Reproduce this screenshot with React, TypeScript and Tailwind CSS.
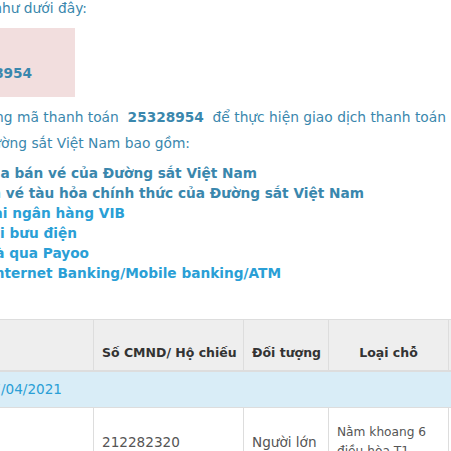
export default function App() {
  return (
    <div className="w-[451px] h-[451px] overflow-hidden bg-white font-['DejaVu_Sans',sans-serif] text-[13.8px] text-[#3a87ad]">
      <div className="-mt-[2px] leading-[20px]">
        <div className="flex justify-end whitespace-nowrap w-[87px]">
          Quý khách vui lòng thanh toán theo thông tin như dưới đây:
        </div>
      </div>

      <div className="mt-[10px] w-[75px] bg-[#f2dede] pt-[15px] pb-[14px] leading-[20px] font-bold text-[13.7px]">
        <div className="h-[20px]" />
        <div className="flex justify-end whitespace-nowrap w-[32px]">Mã thanh toán: 25328954</div>
      </div>

      <div className="mt-[7px] leading-[26px]">
        <div className="flex justify-end whitespace-nowrap w-[446px]">
          <span>
            Quý khách vui lòng sử dụng mã thanh toán&nbsp; <b className="text-[13.7px]">25328954</b>&nbsp; để thực hiện giao dịch thanh toán
          </span>
        </div>
        <div className="flex justify-end whitespace-nowrap w-[190px]">
          tại các điểm giao dịch của Đường sắt Việt Nam bao gồm:
        </div>
      </div>

      <div className="mt-[7px] leading-[20px] font-bold text-[13.7px]">
        <div className="flex justify-end whitespace-nowrap w-[257px]">- Tại các nhà ga bán vé của Đường sắt Việt Nam</div>
        <div className="flex justify-end whitespace-nowrap w-[364px]">- Tại các đại lý bán vé tàu hỏa chính thức của Đường sắt Việt Nam</div>
        <div className="text-[#2a9fd6]">
          <div className="flex justify-end whitespace-nowrap w-[125px]">- Thanh toán tại ngân hàng VIB</div>
          <div className="flex justify-end whitespace-nowrap w-[77px]">- Thanh toán tại bưu điện</div>
          <div className="flex justify-end whitespace-nowrap w-[89px]">- Thanh toán tại cửa hàng tiện ích và qua Payoo</div>
          <div className="flex justify-end whitespace-nowrap w-[281px]">- Thanh toán qua Internet Banking/Mobile banking/ATM</div>
        </div>
      </div>

      <div className="mt-[36px] -ml-[200px] w-[900px]">
        <table className="table-fixed border-collapse w-[900px] text-[13.6px] leading-[20px]">
          <colgroup>
            <col className="w-[293px]" />
            <col className="w-[150px]" />
            <col className="w-[85px]" />
            <col className="w-[120px]" />
            <col className="w-[252px]" />
          </colgroup>
          <thead>
            <tr className="bg-[#eeeeee] text-[#333] font-bold text-[12.5px] whitespace-nowrap">
              <th className="h-[51px] border border-[#dddddd] border-b-2 align-bottom pb-[7px] px-[8px] text-left">Họ tên</th>
              <th className="h-[51px] border border-[#dddddd] border-b-2 align-bottom pb-[7px] px-[8px] text-left">Số CMND/ Hộ chiếu</th>
              <th className="h-[51px] border border-[#dddddd] border-b-2 align-bottom pb-[7px] px-[8px] text-left">Đối tượng</th>
              <th className="h-[51px] border border-[#dddddd] border-b-2 align-bottom pb-[7px] px-[8px] text-center">Loại chỗ</th>
              <th className="h-[51px] border border-[#dddddd] border-b-2 align-bottom pb-[7px] px-[8px] text-left">Thông tin vé</th>
            </tr>
          </thead>
          <tbody>
            <tr className="bg-[#d9edf7]">
              <td colSpan={5} className="h-[37px] border border-[#dddddd] px-[8px] text-[#2a9fd6]">
                <div className="flex justify-end whitespace-nowrap w-[253px]">SE1 Hà Nội - Sài Gòn 17/04/2021</div>
              </td>
            </tr>
            <tr className="text-[#555]">
              <td className="h-[68px] border border-[#dddddd] px-[8px] align-middle">Nguyễn Văn A</td>
              <td className="h-[68px] border border-[#dddddd] px-[8px] align-middle">212282320</td>
              <td className="h-[68px] border border-[#dddddd] px-[8px] align-middle whitespace-nowrap">Người lớn</td>
              <td className="h-[68px] border border-[#dddddd] px-[8px] align-middle text-[12.2px] leading-[19px]">Nằm khoang 6 điều hòa T1</td>
              <td className="h-[68px] border border-[#dddddd] px-[8px] align-middle">SE1</td>
            </tr>
          </tbody>
        </table>
      </div>
    </div>
  );
}
